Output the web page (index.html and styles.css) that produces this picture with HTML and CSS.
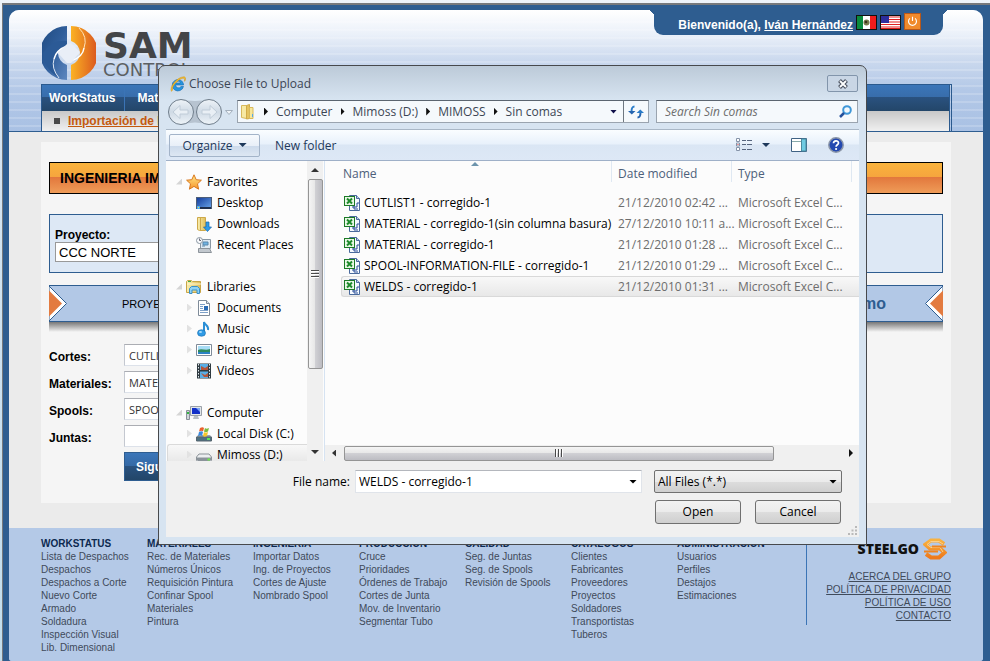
FILE: index.html
```html
<!DOCTYPE html>
<html lang="es">
<head>
<meta charset="utf-8">
<title>SAM Control</title>
<link rel="stylesheet" href="styles.css">
</head>
<body>
<svg class="sprite" aria-hidden="true">
  <defs>
    <linearGradient id="gFolder" x1="0" x2="1"><stop offset="0" stop-color="#f9eeb0"/><stop offset="1" stop-color="#dfbd58"/></linearGradient>
    <linearGradient id="gStar" x1="0" y1="0" x2="0" y2="1"><stop offset="0" stop-color="#ffe98a"/><stop offset="1" stop-color="#f7962a"/></linearGradient>
    <linearGradient id="gScreen" x1="0" y1="0" x2="1" y2="1"><stop offset="0" stop-color="#123a9a"/><stop offset="1" stop-color="#6aa6ea"/></linearGradient>
    <linearGradient id="gBlueHalf" x1="0" y1="0" x2="1" y2="1"><stop offset="0" stop-color="#1f4a80"/><stop offset=".5" stop-color="#2f5e9b"/><stop offset="1" stop-color="#5f88c0"/></linearGradient>
    <linearGradient id="gOrangeHalf" x1="0" y1="0" x2="1" y2="0"><stop offset="0" stop-color="#fbb224"/><stop offset="1" stop-color="#d9541e"/></linearGradient>
    <linearGradient id="gCircle" x1="0" y1="0" x2="0" y2="1"><stop offset="0" stop-color="#eef3f8"/><stop offset=".5" stop-color="#cfdae5"/><stop offset="1" stop-color="#eef4f9"/></linearGradient>
    <linearGradient id="gSteel" x1="0" y1="0" x2="0" y2="1"><stop offset="0" stop-color="#f9b240"/><stop offset="1" stop-color="#ee7a1c"/></linearGradient>
  </defs>
  <symbol id="excel" viewBox="0 0 16 16">
    <path d="M5.500.5h7l3 3v12h-10z" fill="#f6faff" stroke="#4a6a9c"/><path d="M12.500.5v3h3" fill="#b9cdea" stroke="#4a6a9c"/>
    <path d="M8 12h5V8h2M10 10v4h4" fill="none" stroke="#2b4f98"/>
    <rect x=".5" y="1.500" width="10" height="9" fill="#e9f7e6" stroke="#1c7a26"/>
    <path d="M3 3.500l5 5M8 3.500l-5 5" stroke="#1d8a2a" stroke-width="2"/>
  </symbol>
  <symbol id="star" viewBox="0 0 16 16"><path d="M8 .8l2.200 4.900 5.200.5-3.900 3.600 1.100 5.400L8 12.400l-4.600 2.800 1.100-5.400L.6 6.200l5.200-.5z" fill="url(#gStar)" stroke="#d9781f"/></symbol>
  <symbol id="desktop" viewBox="0 0 16 16"><rect x=".5" y="2.500" width="15" height="11" fill="url(#gScreen)" stroke="#4d5e78"/><path d="M1 12h14v2H1z" fill="#20304d"/><path d="M1 11h3v3H1z" fill="#4fb0f0"/><path d="M2 12h1v1H2z" fill="#f5d84a"/></symbol>
  <symbol id="downloads" viewBox="0 0 16 16"><path d="M1.500 1.500h8v13h-6l-2-1z" fill="url(#gFolder)" stroke="#cda94a"/><path d="M4.500 2v13" stroke="#cda94a"/><path d="M10 6h3v5h2.500l-4 4.500L7.500 11H10z" fill="#2d9be8" stroke="#1769b0" stroke-width=".7"/></symbol>
  <symbol id="recent" viewBox="0 0 16 16"><path d="M4.500 2.500h10v9h-10z" fill="#dfeaf2" stroke="#8a97a3"/><path d="M7 5h5v3H7zM6 9h3" fill="#6fb4e4" stroke="#5a87aa"/><path d="M2.500 11.500h11l2 4h-13z" fill="#c2c8ce" stroke="#8d949b"/><circle cx="3.500" cy="3.500" r="3" fill="#f8fafc" stroke="#8a97a3"/><path d="M3.500 1.500v2h1.500" stroke="#445" fill="none" stroke-width=".8"/></symbol>
  <symbol id="libraries" viewBox="0 0 16 16"><path d="M.5 2.500l1-1h4l1 1h8v11H.5z" fill="url(#gFolder)" stroke="#c8a548"/><path d="M1 5h14" stroke="#fff7cf"/><path d="M3.500 14.500V9.500l2-2h6l2 2v5h-2.500v-3.500H6v3.500z" fill="#8ed2f5" stroke="#3a90c8"/><path d="M2 2.500h3" stroke="#3db04a"/></symbol>
  <symbol id="documents" viewBox="0 0 16 16"><path d="M2.500.5h8l3 3v12h-11z" fill="#fff" stroke="#7f8b99"/><path d="M10.500.5v3h3" fill="#dde5ee" stroke="#7f8b99"/><path d="M4 4.500h5M4 6.500h3M4 8.500h3M4 10.500h8M4 12.500h8" stroke="#7da0c8"/><path d="M8 6h4v4H8z" fill="#2b6cb5"/></symbol>
  <symbol id="music" viewBox="0 0 16 16"><path d="M8 12V1c1 3.500 5 3.500 4 8" fill="none" stroke="#2b8fd6" stroke-width="2"/><ellipse cx="5.500" cy="12" rx="4" ry="3.300" fill="#2f9be6" stroke="#176bab" stroke-width=".6"/><ellipse cx="4.500" cy="11" rx="1.500" ry="1" fill="#a9dcfa"/></symbol>
  <symbol id="pictures" viewBox="0 0 16 16"><path d="M.5 2.500h15v11H.5z" fill="#fff" stroke="#7f8b99"/><path d="M2 4h12v8H2z" fill="#a7dcf5"/><path d="M2 8c4-2 7 1 12-1v3H2z" fill="#2f8a5e"/><path d="M2 10h12v2H2z" fill="#2b82c4"/></symbol>
  <symbol id="videos" viewBox="0 0 16 16"><path d="M1 .5h14v15H1z" fill="#2f3a40"/><path d="M4 1h8v6H4zM4 8.500h8V15H4z" fill="#5aaee6"/><path d="M5 3l4 2 3-2v4H5zM5 10l4 2 3-2v4H8z" fill="#b5543a"/><path d="M2.500 1v14M13.500 1v14" stroke="#e4ecf0" stroke-dasharray="1.500 1.500"/></symbol>
  <symbol id="computer" viewBox="0 0 16 16"><path d="M.5 5.500h3v9h-3z" fill="#d0d5da" stroke="#8a9199"/><path d="M1 8h2" stroke="#32b540" stroke-width="2"/><path d="M4.500 1.500h11v9h-11z" fill="#e2e6ea" stroke="#9aa1a8"/><path d="M6 3h8v6H6z" fill="#1230c8"/><path d="M10 3h4v4z" fill="#7ea7f4"/><path d="M8 11h4l1 3H7z" fill="#b7bec5"/></symbol>
  <symbol id="disk" viewBox="0 0 16 16"><path d="M2 9h12l1.500 2v4H.5v-4z" fill="#9aa6b0"/><path d="M.5 11h15v4H.5z" fill="#4d7080" stroke="#56646e"/><path d="M11 13h3" stroke="#5be05a" stroke-width="2"/><path d="M4 2c2-1 3-1 4 0L7 5.500c-1-1-2-1-4 0z" fill="#e9602c"/><path d="M9 2c1 1 2 1 4 0l-1 3.500c-2 1-3 1-4 0z" fill="#7cba3c"/><path d="M3 6c2-1 3-1 4 0l-1 4c-1-1-2-1-4 0z" fill="#3a8ae0"/><path d="M8 6c1 1 2 1 4 0l-1 4c-2 1-3 1-4 0z" fill="#f6c62c"/></symbol>
  <symbol id="drive" viewBox="0 0 16 16"><path d="M3 7h10l2.500 3v3l-1 1.500h-13L.5 13v-3z" fill="#eceef0" stroke="#8b9298"/><path d="M1 10.500h14v2.500l-1 1H2l-1-1z" fill="#8b939a"/><path d="M11.500 12.500h2.500" stroke="#6dea4a" stroke-width="2"/></symbol>
  <symbol id="folder" viewBox="0 0 16 16"><path d="M1.500 1.500h5v13l-5-1z" fill="#f7e9a3" stroke="#d8b95c"/><path d="M6.500 1.500l3-1v14l-3 .5z" fill="#e4c35e" stroke="#d0ab48"/><path d="M9.500 3.500h3.500v11h-3.500z" fill="#f6e79b" stroke="#d8b95c"/><path d="M12 10h1v3h-1z" fill="#54a8e8"/></symbol>
</svg>

<div class="frame">
  <div class="page">
    <header class="header">
      <div class="masthead">
        <div class="brand">
          <svg class="brand-mark" viewBox="0 0 54 54" aria-hidden="true">
            <path d="M25 0A27 27 0 0 0 25 54V39A13 13 0 0 1 16 27A13 13 0 0 1 25 15Z" fill="url(#gBlueHalf)"/>
            <path d="M29 0A27 27 0 0 1 29 54V39A13 13 0 0 0 38 27A13 13 0 0 0 29 15Z" fill="url(#gOrangeHalf)"/>
            <path d="M1 27Q10 13 25 15V20Q16 24 12 31Q9 42 16 51Q2 43 1 27Z" fill="#2b5a96"/>
            <path d="M12 33Q14 24 25 20" fill="none" stroke="#fff" stroke-width="1.500"/>
            <path d="M12 33Q9 42 17 52" fill="none" stroke="#dfe8f4"/>
            <path d="M42 22Q41 31 29 35" fill="none" stroke="#fff" stroke-width="1.500"/>
            <path d="M42 22Q46 11 37 2" fill="none" stroke="#ffe3b8"/>
            <path d="M16 27L25 18L29 17L38 26L29 37L25 37Z" fill="#e9eef7"/>
          </svg>
          <div class="brand-text"><span class="brand-sam">SAM</span><span class="brand-control">CONTROL</span></div>
        </div>
        <div class="user">
          <span class="welcome">Bienvenido(a), <a href="#">Iván Hernández</a></span>
          <svg class="flag" viewBox="0 0 21 15" role="img" aria-label="México"><path d="M0 0h21v15H0z" fill="#111"/><path d="M1 1h6v13H1z" fill="#0a8a3c"/><path d="M7 1h7v13H7z" fill="#fff"/><path d="M14 1h6v13h-6z" fill="#f01c1c"/><circle cx="10.500" cy="7.500" r="3" fill="#7a7a4a"/><circle cx="10" cy="7" r="1.300" fill="#3c2f1a"/></svg>
          <svg class="flag" viewBox="0 0 21 15" role="img" aria-label="USA"><path d="M0 0h21v15H0z" fill="#111"/><path d="M1 1h19v13H1z" fill="#fff"/><path d="M1 2h19M1 4.500h19M1 7h19M1 9.500h19M1 12h19M1 13.500h19" stroke="#e02020"/><path d="M1 1h8v7H1z" fill="#2c2c9c"/></svg>
          <button class="power" aria-label="Salir"><svg viewBox="0 0 17 17"><path d="M5.500 5a4.500 4.500 0 1 0 6 0M8.500 3v5" fill="none" stroke="#fff" stroke-width="1.300"/></svg></button>
        </div>
      </div>
      <nav class="menu">
        <div class="menu-main"><a href="#">WorkStatus</a><a href="#">Materiales</a></div>
        <div class="menu-sub"><span class="bullet"></span><a href="#">Importación de Datos</a></div>
      </nav>
    </header>

    <main class="main">
      <div class="card">
        <h1 class="title">INGENIERIA IMPORTACIÓN DE DATOS</h1>
        <div class="project">
          <label for="proyecto">Proyecto:</label>
          <select id="proyecto"><option>CCC NORTE</option></select>
        </div>
        <div class="band">
          <svg class="notch" viewBox="0 0 18 35" aria-hidden="true"><path d="M0 0L17.500 17.500L0 35Z" fill="#fff" stroke="#2e5d90"/><path d="M0 4.500L13 17.500L0 30.500Z" fill="#e37b40"/></svg>
          <span class="step">PROYECTO</span>
          <strong class="last">Último</strong>
          <svg class="notch" viewBox="0 0 18 35" aria-hidden="true"><path d="M18 0L.5 17.500L18 35Z" fill="#fff" stroke="#2e5d90"/><path d="M18 4.500L5 17.500L18 30.500Z" fill="#e37b40"/></svg>
        </div>
        <div class="band-shadow"></div>
        <form class="files">
          <label for="f1">Cortes:</label><input id="f1" type="text" value="CUTLIST1">
          <label for="f2">Materiales:</label><input id="f2" type="text" value="MATERIAL">
          <label for="f3">Spools:</label><input id="f3" type="text" value="SPOOL">
          <label for="f4">Juntas:</label><input id="f4" type="text">
          <button class="next" type="button">Siguiente</button>
        </form>
      </div>
    </main>

    <footer class="footer">
      <div class="sitemap">
        <div><h2>WORKSTATUS</h2><a href="#">Lista de Despachos</a><a href="#">Despachos</a><a href="#">Despachos a Corte</a><a href="#">Nuevo Corte</a><a href="#">Armado</a><a href="#">Soldadura</a><a href="#">Inspección Visual</a><a href="#">Lib. Dimensional</a></div>
        <div><h2>MATERIALES</h2><a href="#">Rec. de Materiales</a><a href="#">Números Únicos</a><a href="#">Requisición Pintura</a><a href="#">Confinar Spool</a><a href="#">Materiales</a><a href="#">Pintura</a></div>
        <div><h2>INGENIERIA</h2><a href="#">Importar Datos</a><a href="#">Ing. de Proyectos</a><a href="#">Cortes de Ajuste</a><a href="#">Nombrado Spool</a></div>
        <div><h2>PRODUCCION</h2><a href="#">Cruce</a><a href="#">Prioridades</a><a href="#">Órdenes de Trabajo</a><a href="#">Cortes de Junta</a><a href="#">Mov. de Inventario</a><a href="#">Segmentar Tubo</a></div>
        <div><h2>CALIDAD</h2><a href="#">Seg. de Juntas</a><a href="#">Seg. de Spools</a><a href="#">Revisión de Spools</a></div>
        <div><h2>CATALOGOS</h2><a href="#">Clientes</a><a href="#">Fabricantes</a><a href="#">Proveedores</a><a href="#">Proyectos</a><a href="#">Soldadores</a><a href="#">Transportistas</a><a href="#">Tuberos</a></div>
        <div><h2>ADMINISTRACION</h2><a href="#">Usuarios</a><a href="#">Perfiles</a><a href="#">Destajos</a><a href="#">Estimaciones</a></div>
      </div>
      <div class="company">
        <div class="steelgo">STEELGO<svg viewBox="0 0 24 22" aria-hidden="true"><path d="M21 6L16 2.500H8L2.500 6.500L7 10.500H17L21.500 14.500L16 19.500H8L3 16" fill="none" stroke="url(#gSteel)" stroke-width="4"/><path d="M20 6L16 3.500H8L4 6.500L8 9.500H17L20 14" fill="none" stroke="#fcd08a"/><path d="M23 8.500H9M1 13.500h14" stroke="#ef8420" stroke-width="2"/></svg></div>
        <a href="#">ACERCA DEL GRUPO</a><a href="#">POLÍTICA DE PRIVACIDAD</a><a href="#">POLÍTICA DE USO</a><a href="#">CONTACTO</a>
      </div>
    </footer>
  </div>
</div>

<section class="dialog" role="dialog" aria-labelledby="dlg-title">
  <div class="titlebar">
    <svg class="ie" viewBox="0 0 16 16" aria-hidden="true"><path d="M13.500 9H5.500A3 3 0 0 0 11 10.500H13.500A5.700 5.700 0 1 1 13.500 8ZM5.500 7h5A2.600 2.600 0 0 0 5.500 7Z" fill="#2496e0" stroke="#1668b0" stroke-width=".6"/><path d="M1.500 15.500C-1 11 7 1 14 .8c2.500.5 1.500 3.500.5 4.500C15 3 14.500 2 12.500 2.300 8 3.500 1.500 10 2.500 14.500" fill="#f6c231" stroke="#c98a12" stroke-width=".5"/></svg>
    <h2 id="dlg-title">Choose File to Upload</h2>
    <button class="close" aria-label="Close"><svg viewBox="0 0 12 10"><path d="M2.500 1.500l7 7M9.500 1.500l-7 7" stroke="#4a5260" stroke-width="4"/><path d="M3 2l6 6M9 2l-6 6" stroke="#fff" stroke-width="1.800"/></svg></button>
  </div>
  <div class="navbar">
    <svg class="history" viewBox="0 0 68 28" aria-hidden="true">
      <path d="M14 1Q28 5 42 1V27Q28 22 14 27Z" fill="#b7c3d0"/>
      <circle cx="14" cy="14" r="12.500" fill="url(#gCircle)" stroke="#6f7d8b"/><circle cx="42" cy="14" r="12.500" fill="url(#gCircle)" stroke="#6f7d8b"/>
      <path d="M6 14l7-6.500v4.500h8v4h-8v4.500zM50 14l-7-6.500v4.500h-8v4h8v4.500z" fill="#e9eff5" stroke="#c0ccd8"/>
      <path d="M58.500 12.500h7l-3.500 4z" fill="#eef3f8" stroke="#a4b0bd"/>
    </svg>
    <div class="address">
      <svg class="i16" aria-hidden="true"><use href="#folder"/></svg>
      <i class="tri-r"></i><a href="#">Computer</a><i class="tri-r"></i><a href="#">Mimoss (D:)</a><i class="tri-r"></i><a href="#">MIMOSS</a><i class="tri-r"></i><a href="#">Sin comas</a>
      <i class="tri-d push"></i>
      <button class="refresh" aria-label="Refresh"><svg viewBox="0 0 16 14"><path d="M6.500 1.500C4 1.500 3.500 3 3.500 7" fill="none" stroke="#2a7cc8" stroke-width="2"/><path d="M0 6h7.500L3.800 9.500z" fill="#2464b0"/><path d="M9.500 12.500c2.500 0 3-1.500 3-5.500" fill="none" stroke="#2464b0" stroke-width="2"/><path d="M8.500 8h7.500L12.300 4.500z" fill="#2a7cc8"/></svg></button>
    </div>
    <div class="search">
      <input type="search" placeholder="Search Sin comas" aria-label="Search Sin comas">
      <svg viewBox="0 0 13 13" aria-hidden="true"><circle cx="8" cy="5" r="3.800" fill="#f2f8fd" stroke="#3f97d8" stroke-width="2"/><path d="M5 8L1 12" stroke="#24509c" stroke-width="2.500"/></svg>
    </div>
  </div>

  <div class="client">
    <div class="toolbar">
      <button class="organize">Organize <i class="tri-d"></i></button>
      <button class="flat">New folder</button>
      <button class="flat icon-btn push" aria-label="View"><svg width="16" height="14" viewBox="0 0 16 14"><path d="M.5.5h3v3h-3zM.5 5h3v3h-3zM.5 9.500h3v3h-3z" fill="#fff" stroke="#8593a8"/><path d="M1.500 6h1v1h-1z" fill="#d33"/><path d="M6 2.500h4M11 2.500h5M6 6.500h4M11 6.500h5M6 11.500h4M11 11.500h5" stroke="#56657e"/></svg><i class="tri-d"></i></button>
      <button class="flat icon-btn" aria-label="Preview pane"><svg width="16" height="14" viewBox="0 0 16 14"><path d="M.5.5h15v13H.5z" fill="#fff" stroke="#3f6284"/><path d="M1 3.500h9" stroke="#8aa"/><path d="M10.500 1h4.500v12h-4.500z" fill="#6fcbe2" stroke="#4b8aa0"/></svg></button>
      <button class="flat icon-btn" aria-label="Help"><svg width="16" height="16" viewBox="0 0 16 16"><circle cx="8" cy="8" r="7.200" fill="#2449b0" stroke="#8b96a8" stroke-width="1.500"/><path d="M5.500 6.300C5.500 3 10.500 3 10.500 6c0 1.800-2.400 1.800-2.400 3.800" fill="none" stroke="#fff" stroke-width="1.700"/><circle cx="8.100" cy="12" r="1.100" fill="#fff"/></svg></button>
    </div>

    <div class="panes">
      <div class="tree">
        <ul>
          <li class="root"><i class="open"></i><svg class="i16"><use href="#star"/></svg><a href="#">Favorites</a></li>
          <li><svg class="i16"><use href="#desktop"/></svg><a href="#">Desktop</a></li>
          <li><svg class="i16"><use href="#downloads"/></svg><a href="#">Downloads</a></li>
          <li><svg class="i16"><use href="#recent"/></svg><a href="#">Recent Places</a></li>
        </ul>
        <ul>
          <li class="root"><i class="open"></i><svg class="i16"><use href="#libraries"/></svg><a href="#">Libraries</a></li>
          <li><i class="shut"></i><svg class="i16"><use href="#documents"/></svg><a href="#">Documents</a></li>
          <li><i class="shut"></i><svg class="i16"><use href="#music"/></svg><a href="#">Music</a></li>
          <li><i class="shut"></i><svg class="i16"><use href="#pictures"/></svg><a href="#">Pictures</a></li>
          <li><i class="shut"></i><svg class="i16"><use href="#videos"/></svg><a href="#">Videos</a></li>
        </ul>
        <ul>
          <li class="root"><i class="open"></i><svg class="i16"><use href="#computer"/></svg><a href="#">Computer</a></li>
          <li><i class="shut"></i><svg class="i16"><use href="#disk"/></svg><a href="#">Local Disk (C:)</a></li>
          <li class="current"><i class="shut"></i><svg class="i16"><use href="#drive"/></svg><a href="#">Mimoss (D:)</a></li>
        </ul>
      </div>
      <div class="vscroll"><i class="tri-u"></i><div class="vthumb"><i class="grip"></i></div><i class="tri-d"></i></div>
      <div class="list">
        <table>
          <thead><tr><th class="c-name">Name<i class="sort"></i></th><th class="c-date">Date modified</th><th class="c-type">Type</th><th></th></tr></thead>
          <tbody>
            <tr><td><svg class="i16"><use href="#excel"/></svg>CUTLIST1 - corregido-1</td><td>21/12/2010 02:42 ...</td><td>Microsoft Excel C...</td><td></td></tr>
            <tr><td><svg class="i16"><use href="#excel"/></svg>MATERIAL - corregido-1(sin columna basura)</td><td>27/12/2010 10:11 a...</td><td>Microsoft Excel C...</td><td></td></tr>
            <tr><td><svg class="i16"><use href="#excel"/></svg>MATERIAL - corregido-1</td><td>21/12/2010 01:28 ...</td><td>Microsoft Excel C...</td><td></td></tr>
            <tr><td><svg class="i16"><use href="#excel"/></svg>SPOOL-INFORMATION-FILE - corregido-1</td><td>21/12/2010 01:29 ...</td><td>Microsoft Excel C...</td><td></td></tr>
            <tr class="selected"><td><svg class="i16"><use href="#excel"/></svg>WELDS - corregido-1</td><td>21/12/2010 01:31 ...</td><td>Microsoft Excel C...</td><td></td></tr>
          </tbody>
        </table>
        <div class="hscroll"><i class="tri-l"></i><div class="hthumb"><i class="grip v"></i></div><i class="tri-r push"></i></div>
      </div>
    </div>

    <div class="actions">
      <div class="action-row">
        <label for="fname">File name:</label>
        <div class="combo"><input id="fname" type="text" value="WELDS - corregido-1"><i class="tri-d"></i></div>
        <div class="filter"><select aria-label="File type"><option>All Files (*.*)</option></select><i class="tri-d"></i></div>
      </div>
      <div class="action-row"><button class="btn">Open</button><button class="btn">Cancel</button></div>
      <svg class="resize" viewBox="0 0 9 9" aria-hidden="true"><path d="M7 0h2v2H7zM7 3.500h2v2H7zM3.500 3.500h2v2h-2zM7 7h2v2H7zM3.500 7h2v2h-2zM0 7h2v2H0z" fill="#b9b9b9"/></svg>
    </div>
  </div>
</section>
</body>
</html>
```
FILE: styles.css
```css
* { box-sizing: border-box; }
html { background: #eef3f9; }
body {
  margin: 0; padding: 3px 0 0 2px; min-height: 100vh; position: relative;
  font-family: "Liberation Sans", Arial, sans-serif; font-size: 12px; color: #000;
  background: linear-gradient(#eef3f9, #d5e4f1 130px, #c2ddec);
  overflow: hidden;
}
a { color: inherit; text-decoration: none; }
h1, h2, ul { margin: 0; padding: 0; list-style: none; }
button, input, select { font: inherit; color: inherit; margin: 0; border-radius: 0; }
svg { display: block; flex: none; }
.sprite { position: absolute; width: 0; height: 0; }
.i16 { width: 16px; height: 16px; }
.push { margin-left: auto; }

.frame {
  min-height: calc(100vh - 3px); padding: 5px 7px 0 6px;
  background: #2e5d90; border-top: 2px solid #77797c; border-left: 1px solid #77797c;
  display: flex; flex-direction: column;
}
.page { flex: 1; display: flex; flex-direction: column; border-radius: 10px 10px 3px 3px; overflow: hidden; background: #b4c9e7; }

.header {
  padding: 0 31px 0 32px; border-bottom: 1px solid #2e5d90;
  background:
    repeating-linear-gradient(transparent 0 3px, rgba(255,255,255,.18) 3px 5px, transparent 5px 8px),
    linear-gradient(#fff 0, #eaf0f9 25px, #cbd9ee 50px, #b3c8e7 80px, #a9c1e4);
}
.masthead { display: flex; justify-content: space-between; align-items: flex-start; height: 74px; padding-right: 9px; }
.brand { display: flex; padding: 16px 0 0 1px; gap: 7px; }
.brand-mark { width: 54px; height: 54px; }
.brand-text { display: flex; flex-direction: column; font-family: "DejaVu Sans", sans-serif; padding-top: 4px; }
.brand-sam { font-size: 36px; line-height: 32px; font-weight: 700; color: #434548; }
.brand-control { font-size: 18px; line-height: 16px; color: #5c5f63; }
.user {
  position: relative; display: flex; gap: 3px; height: 25px; padding: 3px 22px 0 24px;
  background: #2e5d90; color: #fff; border-radius: 0 0 9px 9px;
}
.user::before, .user::after { content: ""; position: absolute; top: 0; width: 7px; height: 7px; }
.user::before { left: -7px; background: radial-gradient(circle at 0 100%, transparent 7px, #2e5d90 7px); }
.user::after { right: -7px; background: radial-gradient(circle at 100% 100%, transparent 7px, #2e5d90 7px); }
.welcome { font-weight: 700; line-height: 25px; white-space: nowrap; }
.welcome a { text-decoration: underline; }
.flag { width: 21px; height: 15px; margin-top: 2px; }
.power { width: 17px; height: 17px; padding: 0; border: 1px solid #b8581a; background: #f08a2c; }
.power svg { width: 15px; height: 15px; }

.menu { border: 1px solid #2b5a8e; border-bottom: 0; border-right: 3px double #2b5a8e; font-weight: 700; }
.menu-main { display: flex; height: 26px; background: linear-gradient(#3b76b9 0, #386dab 12px, #2a5280 12px, #234669); color: #fff; }
.menu-main a { line-height: 26px; padding: 0 9px 0 7px; border-right: 1px solid #3b74b6; }
.menu-main a + a { padding-left: 12px; border: 0; }
.menu-sub { display: flex; align-items: center; gap: 8px; height: 20px; padding-left: 12px; background: linear-gradient(#c8c8c8, #f0f0f0); color: #c4590f; }
.menu-sub a { text-decoration: underline; }
.bullet { width: 6px; height: 6px; background: #4a4a4a; }

.main { background: #ebebeb; padding: 10px 32px 25px; }
.card { background: #f5f5f5; padding: 20px 8px 22px; }
.title { font-size: 14px; line-height: 30px; padding-left: 10px; border: 1px solid #000; background: linear-gradient(#f9b33c 0, #f6a53e 14px, #e2773c 14px, #ef9c58); white-space: nowrap; overflow: hidden; }
.project { margin: 20px 0 12px; height: 59px; padding: 13px 5px 0; border: 1px solid #2e5d90; background: #dde8f5; }
.project label { display: block; font-weight: 700; line-height: 14px; }
.project select { display: block; width: 200px; height: 20px; padding: 0 3px; border: 1px solid #999; background: #fff; font-size: 13px; appearance: none; }
.band { display: flex; align-items: center; height: 37px; border: solid #2e5d90; border-width: 1px 0; background: #b2c8e6; }
.notch { width: 18px; height: 35px; }
.step { padding-left: 55px; font-size: 11px; }
.last { margin-left: auto; padding-right: 39px; font-size: 16px; color: #2e5d90; }
.band-shadow { height: 10px; background: linear-gradient(#777, #f5f5f5); margin-bottom: 12px; }
.files { display: grid; grid-template-columns: 75px 200px; grid-auto-rows: 22px; row-gap: 5px; align-items: center; }
.files label { font-weight: 700; padding-top: 3px; }
.files input { height: 22px; padding: 0 4px; border: 1px solid #dde2ea; border-top-color: #abadb3; border-left-color: #c4c8d0; background: #fff; font-family: "Open Sans", sans-serif; font-size: 11px; color: #333; }
.next { grid-column: 2; justify-self: start; align-self: start; height: 29px; margin-bottom: -7px; padding: 0 11px; border: 1px solid #2e5d90; color: #fff; font-weight: 700; background: linear-gradient(#3b76b9 0, #3569a5 13px, #2a5280 13px, #234669); }
.files { padding-bottom: 7px; }

.footer { flex: 1; display: flex; align-items: flex-start; gap: 23px; padding: 10px 32px 7px; background: #b4c9e7; font-size: 10px; line-height: 13px; color: #3f4a5a; }
.sitemap { flex: 1; display: grid; grid-template-columns: repeat(7, 1fr); white-space: nowrap; }
.sitemap div { min-width: 0; }
.sitemap h2 { font-size: 10px; line-height: 12px; color: #0d2950; }
.sitemap a, .company a { display: block; }
.company { width: 145px; height: 87px; border-left: 1px solid #3b74b6; text-align: right; white-space: nowrap; }
.company a { text-decoration: underline; }
.steelgo { display: flex; justify-content: flex-end; align-items: center; gap: 4px; height: 22px; margin-bottom: 10px; padding-right: 4px; font: 800 14px/22px "Open Sans", sans-serif; color: #111; }
.steelgo svg { width: 24px; height: 22px; }

.dialog {
  position: absolute; top: 65px; left: 158px; right: 123px; padding: 0 7px 7px;
  border: 1px solid #47494c; border-radius: 7px 7px 0 0;
  background: linear-gradient(#bccad8, #d7e4f1 34px); font-family: "Open Sans", "Noto Sans", sans-serif; font-size: 12px; color: #3c4654;
}
.titlebar { display: flex; align-items: center; height: 31px; padding: 4px 1px 0 4px; gap: 3px; }
.titlebar h2 { font-size: 12px; font-weight: 400; line-height: 18px; }
.ie { width: 16px; height: 16px; }
.close { width: 31px; height: 17px; margin-left: auto; padding: 0; display: grid; place-items: center; border: 1px solid #8295ab; border-radius: 2px; background: #c9d6e5; }
.close svg { width: 12px; height: 10px; }
.navbar { display: flex; align-items: center; height: 32px; padding: 0 1px 3px; }
.history { width: 68px; height: 28px; }
.address, .search { display: flex; align-items: center; height: 23px; border: 1px solid #9aa4af; border-top-color: #5b6570; background: #f5f9fc; }
.address { flex: 1; margin: 0 7px 0 2px; padding-left: 2px; white-space: nowrap; }
.address .tri-r { margin: 0 8px; }
.refresh { width: 25px; height: 21px; margin-left: 6px; padding: 0; display: grid; place-items: center; border: 0; border-left: 1px solid #6e7780; background: transparent; }
.refresh svg { width: 16px; height: 14px; }
.search { width: 202px; padding: 0 5px 0 8px; }
.search input { flex: 1; min-width: 0; padding: 0; border: 0; outline: 0; background: transparent; font-style: italic; appearance: none; }
.search input::placeholder { color: #6d6d6d; opacity: 1; }
.search svg { width: 13px; height: 13px; }

i { display: block; flex: none; }
.tri-d { width: 7px; height: 4px; background: currentColor; clip-path: polygon(0 0, 100% 0, 50% 100%); color: #10104a; }
.tri-u { width: 8px; height: 4px; background: #333; clip-path: polygon(0 100%, 100% 100%, 50% 0); }
.tri-r { width: 4px; height: 8px; background: #111; clip-path: polygon(0 0, 100% 50%, 0 100%); }
.tri-l { width: 4px; height: 7px; background: #333; clip-path: polygon(100% 0, 0 50%, 100% 100%); }

.client { background: #f0f0f0; }
.toolbar { display: flex; align-items: center; height: 32px; padding: 0 15px 0 3px; color: #1e395b; border-top: 1px solid #a9b7c6; border-bottom: 1px solid #9fb0c8; background: linear-gradient(#fafdff 0, #e8f1fb 14px, #dae6f4 15px, #dde8f6); }
.organize { display: flex; align-items: center; justify-content: center; gap: 6px; width: 91px; height: 23px; padding: 0; border: 1px solid #a3b4c9; border-radius: 2px; background: linear-gradient(#f7fafd 0, #e8eff8 11px, #ccdaeb 11px, #dde7f3); }
.flat { border: 0; padding: 0; background: transparent; }
.organize + .flat { margin-left: 15px; }
.icon-btn { display: flex; align-items: center; gap: 10px; margin-left: 21px; }
.icon-btn.push { margin-left: auto; }
.toolbar .tri-d { width: 8px; color: #1e395b; }

.panes { display: flex; height: 300px; background: #fcfcfc; }
.tree { width: 141px; height: 300px; overflow: hidden; padding: 10px 0 0 1px; color: #000; }
.tree ul + ul { margin-top: 21px; }
.tree li { position: relative; display: flex; align-items: center; gap: 5px; height: 21px; padding-left: 29px; white-space: nowrap; line-height: 18px; }
.tree li.root { padding-left: 19px; }
.open, .shut { position: absolute; }
.open { left: 9px; width: 6px; height: 6px; background: #d5d5d5; clip-path: polygon(100% 0, 100% 100%, 0 100%); }
.shut { left: 20px; width: 5px; height: 8px; background: #e2e2e2; clip-path: polygon(0 0, 100% 50%, 0 100%); }
.tree li.current { border: 1px solid #dadada; border-right: 0; padding-left: 28px; border-radius: 3px 0 0 0; background: linear-gradient(#f8f8f8, #e6e6e6); }
.current .shut { left: 19px; }
.vscroll { display: flex; flex-direction: column; align-items: center; width: 16px; padding: 7px 0; background: #f0f0f0; }
.vthumb { display: grid; place-items: center; width: 15px; height: 190px; margin: 7px 0 auto; border: 1px solid #959595; border-radius: 2px; background: linear-gradient(90deg, #f5f5f5, #e6e6e6 50%, #d0d0d4 50%, #bcbcc2); }
.vscroll .tri-d { width: 8px; color: #333; }
.grip { width: 8px; height: 8px; background: repeating-linear-gradient(#4a4a4a 0 1px, #fff 1px 2px, transparent 2px 3px); }
.grip.v { background: repeating-linear-gradient(90deg, #4a4a4a 0 1px, #fff 1px 2px, transparent 2px 3px); }

.list { flex: 1; min-width: 0; display: flex; flex-direction: column; margin-left: 1px; border-left: 1px solid #d6e3f2; }
.list table { table-layout: fixed; width: calc(100% - 16px); margin-left: 16px; border-collapse: separate; border-spacing: 0; }
.list th { height: 21px; padding: 4px 0 0 6px; border-right: 1px solid #dfe8f2; font-weight: 400; text-align: left; color: #4c607a; line-height: 17px; position: relative; }
.list th.c-name { padding-left: 2px; width: 271px; }
.list th.c-date, .list th.c-type { width: 120px; }
.list th:last-child { border: 0; padding: 0; }
.list thead::after { content: ""; display: block; height: 10px; }
.sort { position: absolute; left: 130px; top: 1px; width: 8px; height: 4px; background: #6d94ac; clip-path: polygon(0 100%, 100% 100%, 50% 0); }
.list td { height: 21px; padding: 0 0 0 6px; border: solid transparent; border-width: 1px 0; line-height: 18px; color: #6d6d6d; white-space: nowrap; }
.list td:first-child { display: flex; align-items: center; gap: 4px; padding-left: 3px; color: #000; }
.list td:last-child { padding: 0; }
.selected td { border-color: #d9d9d9; background: linear-gradient(#f8f8f8, #e8e8e8); }
.selected td:first-child { border-left: 1px solid #d9d9d9; border-radius: 3px 0 0 3px; padding-left: 2px; }
.hscroll { display: flex; align-items: center; height: 16px; margin-top: auto; padding: 0 6px 0 7px; background: #f0f0f0; }
.hthumb { display: grid; place-items: center; width: 430px; height: 15px; margin-left: 8px; border: 1px solid #959595; border-radius: 2px; background: linear-gradient(#f5f5f5, #e6e6e6 50%, #d0d0d4 50%, #bcbcc2); }

.actions { position: relative; height: 76px; padding: 9px 17px 0 0; color: #000; }
.action-row { display: flex; justify-content: flex-end; align-items: center; height: 23px; margin-bottom: 7px; }
.action-row label { margin-right: 5px; }
.combo, .filter { display: flex; align-items: center; height: 23px; padding-right: 4px; }
.combo { width: 287px; border: 1px solid #e0e4ea; border-top-color: #b4b7bd; background: #fff; margin-right: 12px; }
.combo input, .filter select { flex: 1; min-width: 0; padding: 0 3px; border: 0; outline: 0; background: transparent; appearance: none; }
.filter { width: 188px; border: 1px solid #707070; border-radius: 2px; background: linear-gradient(#f2f2f2, #ebebeb 50%, #dddddd 50%, #cfcfcf); }
.combo .tri-d, .filter .tri-d { width: 8px; color: #000; }
.btn { width: 86px; height: 24px; padding: 0; border: 1px solid #707070; border-radius: 3px; background: linear-gradient(#f2f2f2, #ebebeb 50%, #dddddd 50%, #cfcfcf); }
.btn + .btn { margin: 0 1px 0 14px; }
.resize { position: absolute; right: 2px; bottom: 2px; width: 9px; height: 9px; }
```
